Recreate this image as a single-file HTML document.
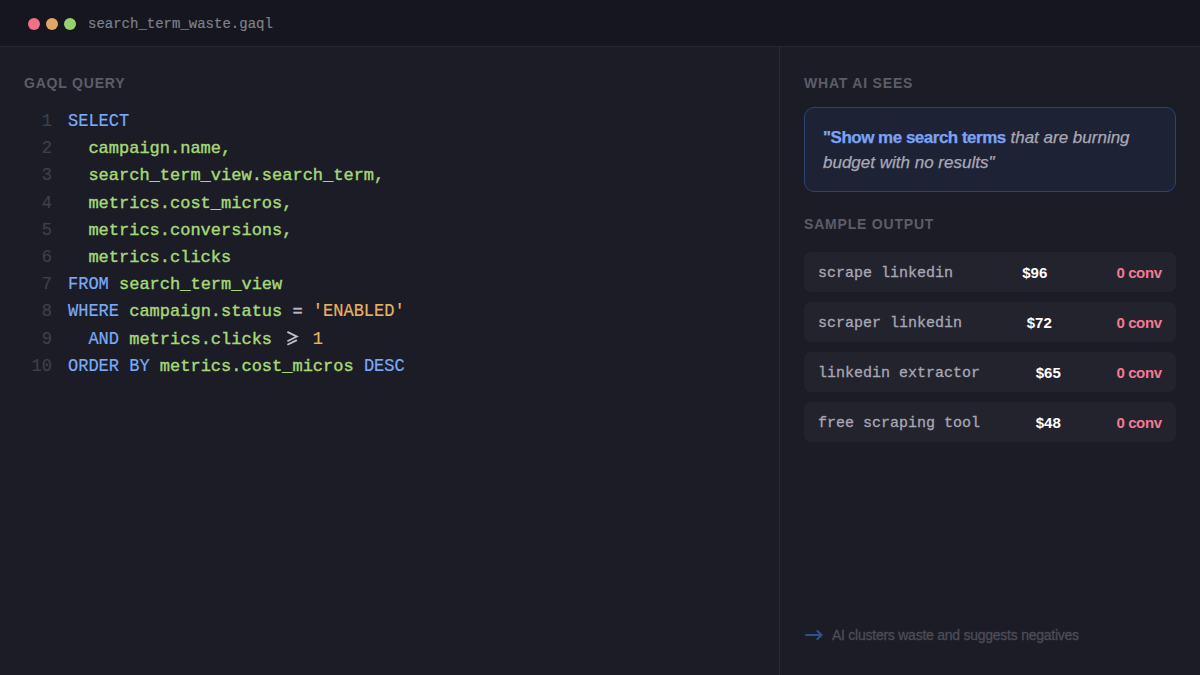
<!DOCTYPE html>
<html><head><meta charset="utf-8">
<style>
*{margin:0;padding:0;box-sizing:border-box}
html,body{width:1200px;height:675px;overflow:hidden;background:#1c1c27}
body{position:relative;font-family:"Liberation Sans",sans-serif}
.header{position:absolute;left:0;top:0;width:1200px;height:47px;background:#16161f;border-bottom:1px solid #25262f}
.dot{position:absolute;top:18px;width:12px;height:12px;border-radius:50%}
.d1{left:28px;background:#f0708a}
.d2{left:46px;background:#e0a868}
.d3{left:64px;background:#98d070}
.fname{position:absolute;left:88px;top:15px;font-family:"Liberation Mono",monospace;font-size:14px;line-height:18px;color:#7d808c;-webkit-text-stroke:0.2px}
.divider{position:absolute;left:779px;top:46px;width:1px;height:629px;background:#292c34}
.label{position:absolute;font-size:14px;font-weight:bold;letter-spacing:0.8px;color:#5c5d68;line-height:16px}
.code{position:absolute;left:24px;top:108px;font-family:"Liberation Mono",monospace;font-size:17px;line-height:27.2px;white-space:pre;-webkit-text-stroke:0.4px}
.ln{display:inline-block;width:28px;padding-right:0;text-align:right;color:#3e4048;margin-right:16px}
.kw,.ln,.str,.num{display:inline-block;transform:scaleY(1.1);transform-origin:0 18.13px;-webkit-text-stroke:0.2px}
.kw{color:#7aaaf8}
.id{color:#a4d977}
.str{color:#e6b264}
.op{color:#b8b8c4}
.ge{display:inline-block;vertical-align:top}
.num{color:#e6b264}
.box{position:absolute;left:804px;top:107px;width:372px;height:85px;background:#1e2235;border:1px solid #2b4373;border-radius:10px;padding:17px 18px;font-size:17px;line-height:25px;color:#a8a9b6;font-style:italic;-webkit-text-stroke:0.25px}
.box b{color:#7aa2f7;font-style:normal;letter-spacing:-0.5px}
.row{position:absolute;left:804px;width:372px;height:40px;background:#23232e;border-radius:7px;display:flex;justify-content:space-between;align-items:center;padding:0 14px}
.term{font-family:"Liberation Mono",monospace;font-size:15px;color:#a8a8b4;position:relative;top:1px;-webkit-text-stroke:0.3px}
.cost{font-size:15px;font-weight:bold;color:#ffffff}
.conv{font-size:15px;font-weight:bold;color:#f27a92;letter-spacing:-0.4px;margin-right:0.4px}
.foot{position:absolute;left:806px;top:626px;font-size:14px;color:#4c4d58;line-height:18px;letter-spacing:-0.25px;-webkit-text-stroke:0.3px}
.arrow{position:absolute;left:806px;top:634px;width:16px;height:2px;background:#3a5a9a}
</style></head>
<body>
<div class="header">
  <div class="dot d1"></div><div class="dot d2"></div><div class="dot d3"></div>
  <div class="fname">search_term_waste.gaql</div>
</div>
<div class="divider"></div>
<div class="label" style="left:24px;top:75px">GAQL QUERY</div>
<div class="code"><span class="ln">1</span><span class="kw">SELECT</span>
<span class="ln">2</span><span class="id">  campaign.name,</span>
<span class="ln">3</span><span class="id">  search_term_view.search_term,</span>
<span class="ln">4</span><span class="id">  metrics.cost_micros,</span>
<span class="ln">5</span><span class="id">  metrics.conversions,</span>
<span class="ln">6</span><span class="id">  metrics.clicks</span>
<span class="ln">7</span><span class="kw">FROM</span> <span class="id">search_term_view</span>
<span class="ln">8</span><span class="kw">WHERE</span> <span class="id">campaign.status</span> <span class="op">=</span> <span class="str">'ENABLED'</span>
<span class="ln">9</span>  <span class="kw">AND</span> <span class="id">metrics.clicks</span> <svg class="ge" width="20.4" height="27.2" viewBox="0 0 20.4 27.2"><path d="M5.4 5.9 L14.9 10.6 L5.4 15.2 M5.4 18.8 L14.9 14.1" fill="none" stroke="#c0c0ca" stroke-width="1.8"/></svg> <span class="num">1</span>
<span class="ln">10</span><span class="kw">ORDER BY</span> <span class="id">metrics.cost_micros</span> <span class="kw">DESC</span></div>

<div class="label" style="left:804px;top:75px">WHAT AI SEES</div>
<div class="box"><b>"Show me search terms</b> that are burning budget with no results"</div>

<div class="label" style="left:804px;top:216px">SAMPLE OUTPUT</div>
<div class="row" style="top:252px"><span class="term">scrape linkedin</span><span class="cost">$96</span><span class="conv">0 conv</span></div>
<div class="row" style="top:302px"><span class="term">scraper linkedin</span><span class="cost">$72</span><span class="conv">0 conv</span></div>
<div class="row" style="top:352px"><span class="term">linkedin extractor</span><span class="cost">$65</span><span class="conv">0 conv</span></div>
<div class="row" style="top:402px"><span class="term">free scraping tool</span><span class="cost">$48</span><span class="conv">0 conv</span></div>

<svg style="position:absolute;left:804px;top:628px" width="20" height="14" viewBox="0 0 20 14"><path d="M2 7 L17.5 7 M13.4 3.0 L17.6 7 L13.4 11.0" fill="none" stroke="#30508a" stroke-width="2.1" stroke-linecap="round" stroke-linejoin="round"/></svg>
<div class="foot" style="left:832px">AI clusters waste and suggests negatives</div>
</body></html>
